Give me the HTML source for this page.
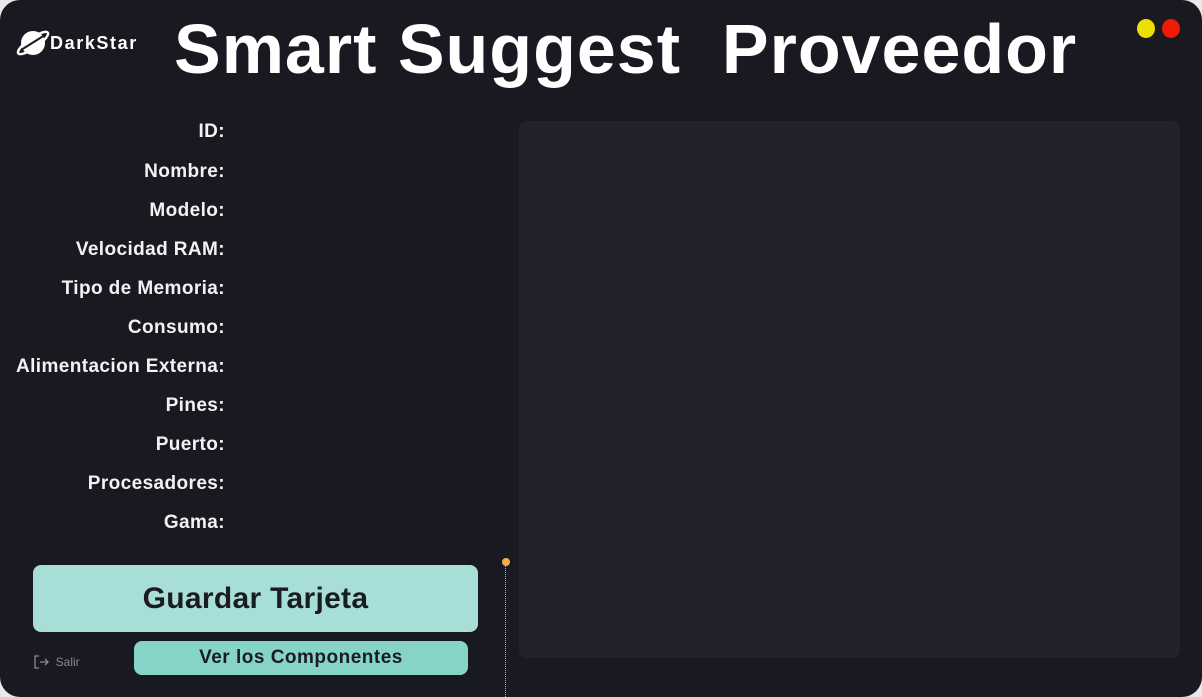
<!DOCTYPE html>
<html><head><style>
html,body{margin:0;padding:0;width:1202px;height:697px;background:#e9e9ea;overflow:hidden}
.win{position:absolute;left:0;top:0;width:1202px;height:697px;background:#191922;border-radius:20px;overflow:hidden;font-family:"Liberation Sans",sans-serif}
.title{position:absolute;left:174px;top:9px;font-size:70px;font-weight:bold;color:#fff;white-space:pre;letter-spacing:1px}
.logo{position:absolute;left:16px;top:27px;color:#fff;font-weight:bold;font-size:18px;letter-spacing:1.6px}
.logo span{position:absolute;left:34px;top:6px}
.dot{position:absolute;top:19px;width:18px;height:19px;border-radius:50%}
.lbl{position:absolute;right:977px;font-size:19px;font-weight:bold;color:#f2f2f2;white-space:nowrap;letter-spacing:0.4px}
.panel{position:absolute;left:519px;top:121px;width:661px;height:537px;background:#22222d;border-radius:8px}
.b1{position:absolute;left:33px;top:565px;width:445px;height:67px;background:#a7ded7;border-radius:8px;color:#1b1b24;font-size:30px;font-weight:bold;text-align:center;line-height:67px;letter-spacing:0.3px}
.b2{position:absolute;left:134px;top:641px;width:334px;height:34px;background:#86d3c8;border-radius:8px;color:#1b1b24;font-size:19px;font-weight:bold;text-align:center;line-height:34px;letter-spacing:0.5px}
.salir{position:absolute;left:33px;top:655px;color:#8a8a92;font-size:12px}
.vl{position:absolute;left:505px;top:563px;height:134px;border-left:1px dotted #f0a040}
.vd{position:absolute;left:502px;top:558px;width:8px;height:8px;border-radius:50%;background:#f5b04a}
</style></head><body><div class="win">
<div class="logo"><svg width="34" height="34" viewBox="0 0 34 34"><circle cx="17" cy="16" r="12" fill="#fff"/><ellipse cx="17" cy="16" rx="18" ry="5" transform="rotate(-35 17 16)" fill="none" stroke="#fff" stroke-width="2.5"/><path d="M5 23 L29 8" stroke="#191922" stroke-width="2"/></svg><span>DarkStar</span></div>
<div class="title">Smart Suggest  Proveedor</div>
<div class="dot" style="left:1137px;background:#ece000"></div>
<div class="dot" style="left:1162px;background:#ef1b04"></div>
<div class="lbl" style="top:121px">ID:</div>
<div class="lbl" style="top:161px">Nombre:</div>
<div class="lbl" style="top:200px">Modelo:</div>
<div class="lbl" style="top:239px">Velocidad RAM:</div>
<div class="lbl" style="top:278px">Tipo de Memoria:</div>
<div class="lbl" style="top:317px">Consumo:</div>
<div class="lbl" style="top:356px">Alimentacion Externa:</div>
<div class="lbl" style="top:395px">Pines:</div>
<div class="lbl" style="top:434px">Puerto:</div>
<div class="lbl" style="top:473px">Procesadores:</div>
<div class="lbl" style="top:512px">Gama:</div>
<div class="panel"></div>
<div class="b1">Guardar Tarjeta</div>
<div class="b2">Ver los Componentes</div>
<div class="salir"><svg width="16" height="14" viewBox="0 0 16 14" style="vertical-align:-3px"><path d="M6 1H2v12h4M7 7h8M12 4l3 3-3 3" fill="none" stroke="#8a8a92" stroke-width="1.3"/></svg> &nbsp;Salir</div>
<div class="vl"></div><div class="vd"></div>
</div></body></html>
